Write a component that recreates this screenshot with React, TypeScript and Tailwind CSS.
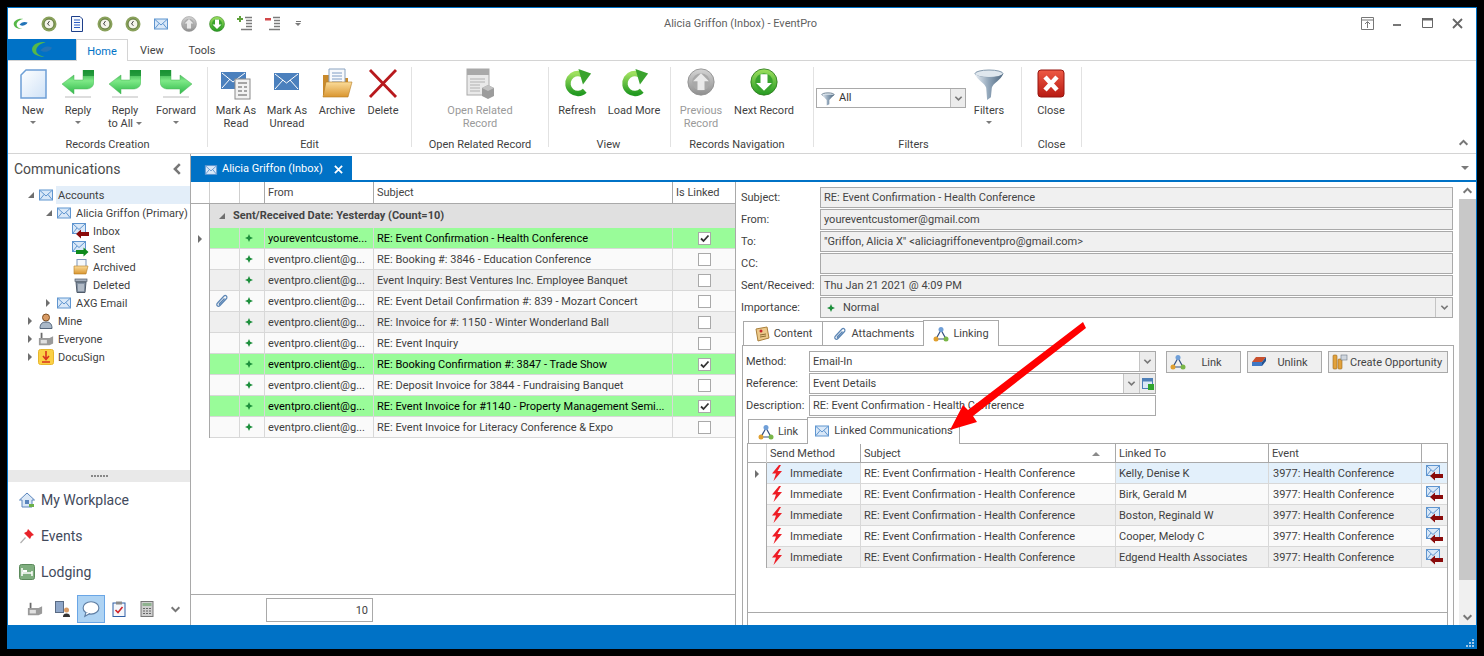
import type { ReactNode } from 'react';

const font = "font-['Roboto',sans-serif]";

type IconProps = { className?: string };

// shared gradients for all the drawn icons
function Defs() {
  return (
    <svg className="block h-0 w-0">
      <defs>
        <linearGradient id="gGreen" x1="0" y1="0" x2="0" y2="1">
          <stop offset="0" stopColor="#1f9d3a" />
          <stop offset="0.45" stopColor="#7ee987" />
          <stop offset="1" stopColor="#2fb84a" />
        </linearGradient>
        <linearGradient id="gDown" x1="0" y1="0" x2="0" y2="1">
          <stop offset="0" stopColor="#9ee05f" />
          <stop offset="1" stopColor="#249a22" />
        </linearGradient>
        <linearGradient id="gGray" x1="0" y1="0" x2="0" y2="1">
          <stop offset="0" stopColor="#d4d4d4" />
          <stop offset="1" stopColor="#8f8f8f" />
        </linearGradient>
        <linearGradient id="gFolder" x1="0" y1="0" x2="0" y2="1">
          <stop offset="0" stopColor="#fbdc9a" />
          <stop offset="1" stopColor="#d9952f" />
        </linearGradient>
        <linearGradient id="gPage" x1="0" y1="0" x2="1" y2="1">
          <stop offset="0" stopColor="#ffffff" />
          <stop offset="1" stopColor="#cfe2f7" />
        </linearGradient>
        <linearGradient id="gFunnel" x1="0" y1="0" x2="1" y2="0">
          <stop offset="0" stopColor="#e8eef4" />
          <stop offset="0.5" stopColor="#8fa4b8" />
          <stop offset="1" stopColor="#4f6880" />
        </linearGradient>
        <linearGradient id="gRed" x1="0" y1="0" x2="0" y2="1">
          <stop offset="0" stopColor="#ee5a45" />
          <stop offset="1" stopColor="#b81a12" />
        </linearGradient>
      </defs>
    </svg>
  );
}

function Mail({ className = 'w-[16px] h-[16px]' }: IconProps) {
  return (
    <svg viewBox="0 0 16 16" className={className}>
      <rect x="1.500" y="3" width="13" height="10" fill="#d9e8f8" stroke="#5f95cf" />
      <path d="M2 3.500 8 9l6-5.500M2 12.500 6 7.500M14 12.500 10 7.500" fill="none" stroke="#5f95cf" />
    </svg>
  );
}

function MailArrow({ color = '#8a0a0a', dir = 'in' }: { color?: string; dir?: 'in' | 'out' }) {
  return (
    <svg viewBox="0 0 18 16" className="h-[16px] w-[18px] shrink-0">
      <rect x="0.500" y="0.500" width="13" height="10" fill="#d9e8f8" stroke="#5f95cf" />
      <path d="M1 1 7 6.500 13 1M1 10l4-5" fill="none" stroke="#5f95cf" />
      {dir === 'in' ? (
        <path d="M4 11 9 6.500V9h8v4H9v2.500Z" fill={color} />
      ) : (
        <path d="M16.500 11 11.500 6.500V9H4v4h7.500v2.500Z" fill={color} />
      )}
    </svg>
  );
}

function Diamond() {
  return (
    <svg viewBox="0 0 8 8" className="h-[8px] w-[8px]">
      <path d="M4 0 5.200 2.800 8 4 5.200 5.200 4 8 2.800 5.200 0 4 2.800 2.800Z" fill="#1d8f3c" />
    </svg>
  );
}

function TriDown({ className = '' }: IconProps) {
  return <span className={`inline-block h-0 w-0 border-x-[3px] border-t-[3px] border-x-transparent border-t-[#7a7a7a] ${className}`} />;
}

function TriRight() {
  return <span className="inline-block h-0 w-0 border-y-[4px] border-l-[4px] border-y-transparent border-l-[#6f6f6f]" />;
}

function TriOpen() {
  return (
    <svg viewBox="0 0 6 6" className="h-[6px] w-[6px] shrink-0">
      <path d="M6 0V6H0Z" fill="#6f6f6f" />
    </svg>
  );
}

function Chevron({ className = '', dir = 'down' }: { className?: string; dir?: 'down' | 'up' | 'left' }) {
  const d = dir === 'down' ? 'M1.500 3 5 6.500 8.500 3' : dir === 'up' ? 'M1.500 7 5 3.500 8.500 7' : 'M7 1.500 3.500 5 7 8.500';
  return (
    <svg viewBox="0 0 10 10" className={className}>
      <path d={d} fill="none" stroke="#777777" strokeWidth="1.800" />
    </svg>
  );
}

function ClockQuick() {
  return (
    <svg viewBox="0 0 16 16" className="h-[16px] w-[16px]">
      <circle cx="8" cy="8" r="7.500" fill="#8aa25c" />
      <circle cx="8" cy="8" r="5" fill="#f4f4ea" stroke="#5d7538" />
      <path d="M8.500 5 6.500 8l2 1.500" fill="none" stroke="#444" />
    </svg>
  );
}

function CircleArrow({ up, size = 16 }: { up?: boolean; size?: number }) {
  return (
    <svg viewBox="0 0 32 32" style={{ width: size, height: size }}>
      <circle cx="16" cy="16" r="15" fill={up ? 'url(#gGray)' : 'url(#gDown)'} stroke={up ? '#8f8f8f' : '#2e7d1e'} />
      <circle cx="16" cy="16" r="10" fill={up ? '#a9a9a9' : '#3aa32e'} />
      {up ? (
        <path d="M16 6 25 15H20V25H12V15H7Z" fill="#e9e9e9" />
      ) : (
        <path d="M16 26 25 17H20V7H12V17H7Z" fill="#ffffff" />
      )}
    </svg>
  );
}

function QuickList({ add }: { add?: boolean }) {
  return (
    <svg viewBox="0 0 16 16" className="h-[16px] w-[16px]">
      {add ? <path d="M2 0h2v2h2v2H4v2H2V4H0V2h2Z" fill="#5fa03a" /> : <rect x="0" y="2" width="6" height="2.500" fill="#d2474a" />}
      <path d="M8 1.500h7M9 4.500h6M9 7.500h6M9 10.500h6M4 13.500h11" stroke="#7b7b7b" strokeWidth="1.400" />
    </svg>
  );
}

function LogoSwirl({ className }: IconProps) {
  return (
    <svg viewBox="0 0 22 16" className={className}>
      <path d="M14 1C6 0 1 4 1 8c0 4 5 7 12 7-5-1-8-3-8-6 0-4 4-7 9-8Z" fill="#56b848" />
      <path d="M9 9c2-3 6-5 11-3-1 3-6 6-11 3Z" fill="#2274b8" />
    </svg>
  );
}

function ReplyBig() {
  return (
    <svg viewBox="0 0 32 28" className="mt-[2px] h-[28px] w-[32px]">
      <path d="M0 14 12 5V10H21V0H32V11C32 17 28 19 24 19H12V24Z" fill="url(#gGreen)" stroke="#4fb55a" strokeWidth="0.500" />
      <path d="M21 0H32V6H21Z" fill="#138a2e" opacity="0.700" />
      <rect x="3" y="26" width="26" height="2" fill="#dddddd" />
    </svg>
  );
}

function ForwardBig() {
  return (
    <svg viewBox="0 0 32 28" className="mt-[2px] h-[28px] w-[32px]">
      <path d="M32 14 20 5V10H11V0H0V11C0 17 4 19 8 19H20V24Z" fill="url(#gGreen)" stroke="#4fb55a" strokeWidth="0.500" />
      <path d="M0 0H11V6H0Z" fill="#138a2e" opacity="0.700" />
      <rect x="3" y="26" width="26" height="2" fill="#dddddd" />
    </svg>
  );
}

function RefreshBig() {
  return (
    <svg viewBox="0 0 32 32" className="mt-[1px] h-[29px] w-[29px]">
      <path d="M24 24A11 11 0 1 1 21 6" fill="none" stroke="url(#gDown)" strokeWidth="6" />
      <path d="M17 0 31 5 22 17Z" fill="#3aa32e" />
    </svg>
  );
}

const bigIcons: Record<string, ReactNode> = {
  new: (
    <svg viewBox="0 0 32 32" className="h-[32px] w-[32px]">
      <path d="M9 2H29V30H4V7Z" fill="url(#gPage)" stroke="#6d9fd6" strokeWidth="1.500" />
    </svg>
  ),
  reply: <ReplyBig />,
  forward: <ForwardBig />,
  read: (
    <svg viewBox="0 0 32 32" className="h-[32px] w-[32px]">
      <rect x="1" y="4" width="25" height="17" fill="#4b80bd" />
      <path d="M2 5 13 14 25 5M2 20l8-9M25 20l-8-9" fill="none" stroke="#ffffff" />
      <rect x="15" y="11" width="15" height="20" fill="#f2f2f2" stroke="#8a8a8a" />
      <path d="M18 15h9M18 19h4M24 19h3M18 23h4M24 23h3M18 27h9" stroke="#a5a5a5" strokeWidth="2" />
    </svg>
  ),
  unread: (
    <svg viewBox="0 0 32 32" className="h-[32px] w-[32px]">
      <rect x="3" y="5" width="25" height="17" fill="#4b80bd" />
      <path d="M4 6 15.500 15 27 6M4 21l8-9M27 21l-8-9" fill="none" stroke="#ffffff" />
    </svg>
  ),
  archive: (
    <svg viewBox="0 0 32 32" className="h-[32px] w-[32px]">
      <path d="M2 7H12L14 10H27V27H2Z" fill="#c98a2c" />
      <path d="M8 1H24V20H8Z" fill="#f7f9fc" stroke="#8aa3c0" />
      <path d="M11 5H21M11 8H21M11 11H21M11 14H21" stroke="#7e9cc4" />
      <path d="M5 14H31L27 29H2Z" fill="url(#gFolder)" stroke="#b67c24" strokeWidth="0.600" />
    </svg>
  ),
  delete: (
    <svg viewBox="0 0 32 32" className="h-[32px] w-[32px]">
      <path d="M3 2 29 29M29 2 3 29" stroke="#b8191d" strokeWidth="2.800" />
    </svg>
  ),
  related: (
    <svg viewBox="0 0 32 32" className="h-[32px] w-[32px]">
      <rect x="3" y="1" width="22" height="26" fill="#e9e9e9" stroke="#a9a9a9" />
      <rect x="3" y="1" width="22" height="6" fill="#a9a9a9" />
      <path d="M6 11H21M6 14H21M6 17H16M6 20H16M6 23H16" stroke="#b1b1b1" />
      <path d="M18 20 24 17 30 20V28L24 31 18 28Z" fill="#9c9c9c" />
      <path d="M18 20 24 23 30 20 24 17Z" fill="#c2c2c2" />
    </svg>
  ),
  refresh: <RefreshBig />,
  prev: <CircleArrow up size={28} />,
  next: <CircleArrow size={28} />,
  filter: (
    <svg viewBox="0 0 32 34" className="h-[34px] w-[30px]">
      <ellipse cx="16" cy="5" rx="15" ry="4" fill="#dfe7ee" stroke="#7d93a8" />
      <path d="M1 5C3 12 12 15 13 20L14 33 18 30 19 20C20 15 29 12 31 5 26 10 6 10 1 5Z" fill="url(#gFunnel)" />
    </svg>
  ),
  close: (
    <svg viewBox="0 0 32 32" className="h-[32px] w-[32px]">
      <rect x="3" y="2" width="26" height="27" rx="3" fill="url(#gRed)" stroke="#96150f" />
      <path d="M10 9 22 22M22 9 10 22" stroke="#ffffff" strokeWidth="4.500" />
    </svg>
  ),
};

function NetLink() {
  return (
    <svg viewBox="0 0 16 16" className="h-[16px] w-[16px] shrink-0">
      <path d="M8 4 3 13H13Z" fill="none" stroke="#35507f" strokeWidth="1.200" />
      <circle cx="8" cy="3.500" r="2.500" fill="#6f9fd8" />
      <circle cx="3" cy="13" r="2.500" fill="#e0a030" />
      <circle cx="13" cy="13" r="2.500" fill="#7ab648" />
    </svg>
  );
}

function Clip({ className = 'h-[16px] w-[16px]' }: IconProps) {
  return (
    <svg viewBox="0 0 16 16" className={className}>
      <path d="M13 5 6 12.500C4 14.500 1.500 12 3.500 10L10 3C11.500 1.500 14 3.500 12.500 5.500L6.500 11.500C5.700 12.200 4.700 11.300 5.500 10.500L10.500 5.500" fill="none" stroke="#5c86b5" strokeWidth="1.200" />
    </svg>
  );
}

function Bolt() {
  return (
    <svg viewBox="0 0 12 16" className="h-[16px] w-[12px] shrink-0">
      <path d="M8 0 1 8.500H5L2.500 16 11 6H6.500L10 0Z" fill="#ee1c25" />
    </svg>
  );
}

function Checkbox({ checked }: { checked?: boolean }) {
  return (
    <span className="flex h-[13px] w-[13px] items-center justify-center border border-[#a9a9a9] bg-white">
      {checked && (
        <svg viewBox="0 0 11 11" className="h-[11px] w-[11px]">
          <path d="M2 5.500 4.500 8 9.500 2.500" fill="none" stroke="#333333" strokeWidth="1.800" />
        </svg>
      )}
    </span>
  );
}

type RibbonBtn = { label: string; line2?: string; icon: string; w: number; menu?: boolean; off?: boolean };

function RibbonButton({ label, line2, icon, w, menu, off }: RibbonBtn) {
  return (
    <div style={{ width: w }} className={`flex shrink-0 flex-col items-center text-center leading-[13px] ${off ? 'text-[#9a9a9a]' : 'text-[#3f3f3f]'}`}>
      <div className="flex h-[38px] items-start justify-center pt-[2px]">{bigIcons[icon]}</div>
      <div className="whitespace-nowrap">{label}</div>
      {line2 ? (
        <div className="flex items-center gap-[3px] whitespace-nowrap">
          {line2}
          {menu && <TriDown />}
        </div>
      ) : (
        menu && <TriDown className="mt-[4px]" />
      )}
    </div>
  );
}

function RibbonGroup({ w, pl, captionPr = 0, caption, children }: { w: number; pl: number; captionPr?: number; caption: string; children: ReactNode }) {
  return (
    <>
      <div style={{ width: w }} className="mt-[5px] flex h-[86px] shrink-0 flex-col">
        <div style={{ paddingLeft: pl }} className="flex h-[72px] items-start">
          {children}
        </div>
        <div style={{ paddingRight: captionPr }} className="text-center leading-[14px] text-[#3f3f3f]">
          {caption}
        </div>
      </div>
      <div className="mt-[6px] h-[80px] w-px shrink-0 bg-[#e2e2e2]" />
    </>
  );
}

function Ribbon() {
  return (
    <div className="flex h-[93px] border-b border-[#d4d4d4]">
      <RibbonGroup w={199} pl={4} caption="Records Creation">
        <RibbonButton label="New" icon="new" w={42} menu />
        <RibbonButton label="Reply" icon="reply" w={48} menu />
        <RibbonButton label="Reply" line2="to All" icon="reply" w={46} menu />
        <RibbonButton label="Forward" icon="forward" w={56} menu />
      </RibbonGroup>
      <RibbonGroup w={203} pl={6} caption="Edit">
        <RibbonButton label="Mark As" line2="Read" icon="read" w={44} />
        <RibbonButton label="Mark As" line2="Unread" icon="unread" w={58} />
        <RibbonButton label="Archive" icon="archive" w={42} />
        <RibbonButton label="Delete" icon="delete" w={50} />
      </RibbonGroup>
      <RibbonGroup w={136} pl={0} caption="Open Related Record">
        <RibbonButton label="Open Related" line2="Record" icon="related" w={136} off />
      </RibbonGroup>
      <RibbonGroup w={121} pl={4} captionPr={2} caption="View">
        <RibbonButton label="Refresh" icon="refresh" w={48} />
        <RibbonButton label="Load More" icon="refresh" w={66} />
      </RibbonGroup>
      <RibbonGroup w={142} pl={6} captionPr={10} caption="Records Navigation">
        <RibbonButton label="Previous" line2="Record" icon="prev" w={48} off />
        <RibbonButton label="Next Record" icon="next" w={78} />
      </RibbonGroup>
      <RibbonGroup w={207} pl={2} captionPr={8} caption="Filters">
        <div className="mt-[22px] flex h-[20px] w-[150px] border border-[#a9a9a9] bg-white">
          <div className="flex flex-1 items-center gap-[4px] pl-[4px] pt-[1px] text-[#333333]">
            <svg viewBox="0 0 16 16" className="h-[16px] w-[14px]">
              <ellipse cx="8" cy="3" rx="7" ry="2" fill="#dfe7ee" stroke="#5e7387" />
              <path d="M1 3 6.500 9V15.500L9.500 14V9L15 3Z" fill="url(#gFunnel)" />
            </svg>
            All
          </div>
          <div className="flex w-[15px] items-center justify-center border-l border-[#bdbdbd] bg-[#ececec]">
            <Chevron className="h-[9px] w-[9px]" />
          </div>
        </div>
        <RibbonButton label="Filters" icon="filter" w={46} menu />
      </RibbonGroup>
      <RibbonGroup w={59} pl={0} caption="Close">
        <RibbonButton label="Close" icon="close" w={58} />
      </RibbonGroup>
      <div className="ml-auto mr-[7px] self-end pb-[5px]">
        <Chevron dir="up" className="h-[11px] w-[11px]" />
      </div>
    </div>
  );
}

function TitleBar() {
  return (
    <div className="grid h-[31px] grid-cols-[1fr_auto_1fr] items-center pr-[3px]">
      <div className="flex items-center gap-[12px] pl-[5px]">
        <LogoSwirl className="h-[16px] w-[16px]" />
        <ClockQuick />
        <svg viewBox="0 0 16 16" className="h-[16px] w-[16px]">
          <path d="M2.500.5H11L13.500 3V15.500H2.500Z" fill="#f6f9fe" stroke="#1d3f8a" />
          <path d="M5 4H11M5 6.500H11M5 9H11M5 11.500H11" stroke="#2a5cc4" />
        </svg>
        <ClockQuick />
        <ClockQuick />
        <Mail />
        <CircleArrow up />
        <CircleArrow />
        <QuickList add />
        <QuickList />
        <div className="ml-[2px] flex flex-col items-center gap-[1px]">
          <span className="h-px w-[5px] bg-[#777777]" />
          <TriDown />
        </div>
      </div>
      <div className="pt-[2px] text-[#5f5f5f]">Alicia Griffon (Inbox) - EventPro</div>
      <div className="flex items-center justify-end gap-[17px] pr-[9px]">
        <svg viewBox="0 0 13 13" className="h-[13px] w-[13px]">
          <path d="M.5.500H12.500V12.500H.5ZM.5 3H12.500M6.500 11V5M4 7 6.500 4.500 9 7" fill="none" stroke="#777777" />
        </svg>
        <svg viewBox="0 0 13 13" className="h-[13px] w-[13px]">
          <rect x="2" y="7" width="8" height="2" fill="#777777" />
        </svg>
        <svg viewBox="0 0 13 13" className="h-[13px] w-[13px]">
          <path d="M1.500 1.500H11.500V10.500H1.500Z" fill="none" stroke="#666666" />
          <rect x="1" y="1" width="11" height="2.500" fill="#666666" />
        </svg>
        <svg viewBox="0 0 13 13" className="h-[13px] w-[13px]">
          <path d="M2 2 11 11M11 2 2 11" stroke="#666666" strokeWidth="1.800" />
        </svg>
      </div>
    </div>
  );
}

function TabsRow() {
  return (
    <div className="flex h-[22px] items-stretch border-b border-[#d4d4d4]">
      <div className="flex w-[68px] items-center justify-center bg-[#0072c6]">
        <LogoSwirl className="h-[17px] w-[23px]" />
      </div>
      <div className="z-10 -mb-px flex w-[52px] items-center justify-center border-x border-t border-[#d4d4d4] bg-white pt-[3px] text-[#0072c6]">Home</div>
      <div className="flex w-[48px] items-center justify-center pt-[4px] text-[#444444]">View</div>
      <div className="flex w-[52px] items-center justify-center pt-[4px] text-[#444444]">Tools</div>
    </div>
  );
}

type TreeRow = { label: string; indent: number; toggle?: 'open' | 'closed'; icon: ReactNode; active?: boolean };

const person = (
  <svg viewBox="0 0 16 16" className="h-[16px] w-[16px]">
    <circle cx="8" cy="4.500" r="3.500" fill="#d99b64" stroke="#7d4f22" />
    <path d="M2 15.500C2 10 5 9 8 9s6 1 6 6.500Z" fill="#a9b8c8" stroke="#54657a" />
  </svg>
);
const factory = (
  <svg viewBox="0 0 18 16" className="h-[16px] w-[16px]">
    <rect x="3" y="1" width="2" height="6" fill="#6a6a6a" />
    <path d="M1 7H13L17 5V13L13 15H1Z" fill="#9a9a9a" />
    <rect x="3" y="9" width="7" height="4" fill="#e0e0e0" />
  </svg>
);
const docusign = (
  <svg viewBox="0 0 16 16" className="h-[16px] w-[16px]">
    <rect x="0.500" y="0.500" width="15" height="15" rx="2" fill="#fbd045" stroke="#e8b62c" />
    <path d="M8 2V10M5 7 8 10.500 11 7M4 13H12" fill="none" stroke="#d8351f" strokeWidth="1.600" />
  </svg>
);

const tree: TreeRow[] = [
  { label: 'Accounts', indent: 20, toggle: 'open', icon: <Mail />, active: true },
  { label: 'Alicia Griffon (Primary)', indent: 38, toggle: 'open', icon: <Mail /> },
  { label: 'Inbox', indent: 55, icon: <MailArrow /> },
  { label: 'Sent', indent: 55, icon: <MailArrow color="#0e8a1d" dir="out" /> },
  {
    label: 'Archived',
    indent: 55,
    icon: (
      <svg viewBox="0 0 16 16" className="h-[16px] w-[16px]">
        <rect x="4" y="0.500" width="9" height="11" fill="#f5f8fc" stroke="#7c96b8" />
        <path d="M1 7H15L13 15H1Z" fill="url(#gFolder)" stroke="#b67c24" strokeWidth="0.600" />
      </svg>
    ),
  },
  {
    label: 'Deleted',
    indent: 55,
    icon: (
      <svg viewBox="0 0 16 16" className="h-[16px] w-[16px]">
        <path d="M3 5H13L12 15.500H4Z" fill="#8592a3" stroke="#4f5a69" />
        <rect x="2" y="2" width="12" height="2.500" fill="#a5afbd" stroke="#4f5a69" strokeWidth="0.700" />
        <path d="M6 7V14M8 7V14M10 7V14" stroke="#dfe4ea" />
      </svg>
    ),
  },
  { label: 'AXG Email', indent: 38, toggle: 'closed', icon: <Mail /> },
  { label: 'Mine', indent: 20, toggle: 'closed', icon: person },
  { label: 'Everyone', indent: 20, toggle: 'closed', icon: factory },
  { label: 'DocuSign', indent: 20, toggle: 'closed', icon: docusign },
];

function LeftPanel() {
  return (
    <div className="flex h-full w-[183px] shrink-0 flex-col border-r border-[#a9a9a9]">
      <div className="flex h-[32px] items-center justify-between pb-[2px] pl-[6px] pr-[6px] text-[14px] text-[#4a4a4a]">
        Communications
        <Chevron dir="left" className="h-[14px] w-[14px]" />
      </div>
      <div className="flex-1">
        {tree.map((row) => (
          <div key={row.label} style={{ paddingLeft: row.indent }} className="flex h-[18px] items-center whitespace-nowrap text-[#3f3f3f]">
            <span className="flex w-[10px] shrink-0 items-center">
              {row.toggle === 'open' && <TriOpen />}
              {row.toggle === 'closed' && <TriRight />}
            </span>
            <span className="flex w-[16px] shrink-0 justify-center">{row.icon}</span>
            <span className={`ml-[2px] flex h-[18px] flex-1 items-center pl-[2px] pt-[2px] ${row.active ? 'bg-[#e3eef9]' : ''}`}>{row.label}</span>
          </div>
        ))}
      </div>
      <div className="flex h-[12px] items-center justify-center gap-[1px] bg-[#e9e9e9]">
        {[0, 1, 2, 3, 4, 5].map((n) => (
          <span key={n} className="h-[2px] w-[2px] bg-[#888888]" />
        ))}
      </div>
      <NavItem label="My Workplace" icon={
        <svg viewBox="0 0 16 16" className="h-[16px] w-[16px]">
          <path d="M8 1 0.500 8H3V15H13V8H15.500Z" fill="#dbe8f6" stroke="#5a85bd" />
          <rect x="6" y="8" width="4" height="4" fill="#5a85bd" />
          <rect x="10" y="12" width="5" height="3" fill="#6cb04a" />
        </svg>
      } />
      <NavItem label="Events" icon={
        <svg viewBox="0 0 16 16" className="h-[16px] w-[16px]">
          <path d="M9 1 15 7 12.500 8 11 11 5 5 8 3.500Z" fill="#e8232a" />
          <path d="M6.500 9.500 1.500 15" stroke="#b0b0b0" strokeWidth="1.200" />
        </svg>
      } />
      <NavItem label="Lodging" icon={
        <svg viewBox="0 0 16 16" className="h-[16px] w-[16px]">
          <rect x="0.500" y="0.500" width="15" height="15" rx="2" fill="#7fae7f" stroke="#5b8a5b" />
          <path d="M3 4V12M13 7V12M3 9H13" stroke="#ffffff" strokeWidth="1.500" />
          <rect x="4" y="6" width="4" height="2" fill="#ffffff" />
        </svg>
      } />
      <div className="flex h-[35px] items-start pl-[13px] pt-[5px]">
        <SmallSlot>{factory}</SmallSlot>
        <SmallSlot>
          <svg viewBox="0 0 16 16" className="h-[16px] w-[16px]">
            <rect x="0.500" y="0.500" width="8" height="11" fill="#8fa7c9" stroke="#5a6b84" />
            <circle cx="11.500" cy="9" r="2.500" fill="#d99b64" />
            <path d="M8 16C8 13 10 12.500 11.500 12.500S15 13 15 16Z" fill="#333333" />
          </svg>
        </SmallSlot>
        <SmallSlot active>
          <svg viewBox="0 0 16 16" className="h-[18px] w-[18px]">
            <ellipse cx="8" cy="7" rx="7" ry="5.500" fill="#ffffff" stroke="#5f7ea3" />
            <path d="M3.500 11 2.500 14.500 7 12" fill="#ffffff" stroke="#5f7ea3" />
          </svg>
        </SmallSlot>
        <SmallSlot>
          <svg viewBox="0 0 16 16" className="h-[16px] w-[16px]">
            <rect x="2" y="2" width="12" height="13.500" fill="#f5f7fb" stroke="#2f5fa6" />
            <rect x="5" y="0.500" width="6" height="3" fill="#8b8b8b" />
            <path d="M4.500 9 7 11.500 11.500 6" fill="none" stroke="#d0242a" strokeWidth="1.600" />
          </svg>
        </SmallSlot>
        <SmallSlot>
          <svg viewBox="0 0 16 16" className="h-[16px] w-[16px]">
            <rect x="2" y="0.500" width="12" height="15" fill="#cfcfcf" stroke="#777777" />
            <rect x="3.500" y="2" width="9" height="3" fill="#8fb28f" />
            <path d="M4 7.500H12M4 10H12M4 12.500H12" stroke="#666666" strokeWidth="1.200" strokeDasharray="2 1" />
          </svg>
        </SmallSlot>
        <div className="flex h-[28px] w-[28px] items-center justify-center">
          <Chevron className="h-[11px] w-[11px]" />
        </div>
      </div>
    </div>
  );
}

function NavItem({ label, icon }: { label: string; icon: ReactNode }) {
  return (
    <div className="flex h-[36px] items-center gap-[6px] pl-[11px] text-[14px] text-[#424a5c]">
      {icon}
      {label}
    </div>
  );
}

function SmallSlot({ children, active }: { children: ReactNode; active?: boolean }) {
  return (
    <div className={`flex h-[28px] w-[28px] items-center justify-center ${active ? 'border border-[#6aa6e6] bg-[#aed3f3]' : ''}`}>{children}</div>
  );
}

const messages = [
  { from: 'youreventcustome...', subject: 'RE: Event Confirmation - Health Conference', linked: true },
  { from: 'eventpro.client@g...', subject: 'RE: Booking #: 3846 - Education Conference' },
  { from: 'eventpro.client@g...', subject: 'Event Inquiry: Best Ventures Inc. Employee Banquet' },
  { from: 'eventpro.client@g...', subject: 'RE: Event Detail Confirmation #: 839 - Mozart Concert', clip: true },
  { from: 'eventpro.client@g...', subject: 'RE: Invoice for #: 1150 - Winter Wonderland Ball' },
  { from: 'eventpro.client@g...', subject: 'RE: Event Inquiry' },
  { from: 'eventpro.client@g...', subject: 'RE: Booking Confirmation #: 3847 - Trade Show', linked: true },
  { from: 'eventpro.client@g...', subject: 'RE: Deposit Invoice for 3844 - Fundraising Banquet' },
  { from: 'eventpro.client@g...', subject: 'RE: Event Invoice for #1140 - Property Management Semi...', linked: true },
  { from: 'eventpro.client@g...', subject: 'RE: Event Invoice for Literacy Conference & Expo' },
];

function MessageList() {
  return (
    <div className="flex h-full w-[545px] shrink-0 flex-col border-r border-[#a9a9a9]">
      <div className="grid h-[22px] grid-cols-[19px_30px_25px_109px_299px_62px] border-b border-[#a9a9a9] text-[#444444]">
        <div className="border-r border-[#cfcfcf]" />
        <div className="border-r border-[#cfcfcf]" />
        <div className="border-r border-[#a9a9a9]" />
        <div className="flex items-center border-r border-[#a9a9a9] pl-[3px] pt-[2px]">From</div>
        <div className="flex items-center border-r border-[#a9a9a9] pl-[3px] pt-[2px]">Subject</div>
        <div className="flex items-center pl-[3px] pt-[2px]">Is Linked</div>
      </div>
      <div className="flex h-[24px] pl-[18px]">
        <div className="flex flex-1 items-center gap-[8px] border-l border-[#a9a9a9] bg-[#e0e0e0] pl-[9px] font-bold text-[#444444]">
          <TriOpen />
          Sent/Received Date: Yesterday (Count=10)
        </div>
      </div>
      <div className="flex-1">
        {messages.map((m, i) => (
          <div key={i} className="grid h-[21px] grid-cols-[19px_30px_25px_109px_299px_62px]">
            <div className="flex items-center justify-center border-r border-[#a9a9a9]">{i === 0 && <TriRight />}</div>
            <div className={`col-span-5 grid grid-cols-subgrid border-b border-[#d8d8d8] ${m.linked ? 'bg-[#99fc99] text-black' : i % 2 === 0 ? 'bg-[#efefef] text-[#3f3f3f]' : 'bg-[#fafafa] text-[#3f3f3f]'}`}>
              <div className="flex items-center justify-center border-r border-[#d8d8d8] pr-[6px]">{m.clip && <Clip />}</div>
              <div className="flex items-center justify-center border-r border-[#d8d8d8] pr-[7px]">
                <Diamond />
              </div>
              <div className="flex items-center overflow-hidden whitespace-nowrap border-r border-[#d8d8d8] pl-[3px] pt-[2px]">{m.from}</div>
              <div className="flex items-center overflow-hidden whitespace-nowrap border-r border-[#d8d8d8] pl-[3px] pt-[2px]">{m.subject}</div>
              <div className="flex items-center justify-center">
                <Checkbox checked={m.linked} />
              </div>
            </div>
          </div>
        ))}
      </div>
      <div className="flex h-[31px] items-start border-t border-[#a9a9a9] pl-[75px] pt-[3px]">
        <div className="flex h-[24px] w-[107px] items-center justify-end border border-[#a9a9a9] pr-[4px] pt-[2px] text-[#3f3f3f]">10</div>
      </div>
    </div>
  );
}

function DetailRow({ label, value, children }: { label: string; value?: string; children?: ReactNode }) {
  return (
    <div className="mb-px flex h-[21px] items-stretch">
      <div className="flex w-[79px] shrink-0 items-center whitespace-nowrap pt-[2px] text-[#3f3f3f]">{label}</div>
      <div className="flex flex-1 items-center border border-[#a9a9a9] bg-[#f0f0f0] pl-[3px] text-[#444444]">
        <span className="pt-[2px]">{value}</span>
        {children}
      </div>
    </div>
  );
}

function TabHead({ label, icon, active, w, h = 24, textPt = 2 }: { label: string; icon: ReactNode; active?: boolean; w: number; h?: number; textPt?: number }) {
  return (
    <div
      style={{ width: w, height: h }}
      className={`flex items-center justify-center gap-[4px] whitespace-nowrap border-l border-t border-r border-[#a9a9a9] text-[#444444] ${active ? 'z-10 -mb-px -ml-px bg-white' : '-ml-px'}`}
    >
      {icon}
      <span style={{ paddingTop: textPt }}>{label}</span>
    </div>
  );
}

function FormRow({ label, children }: { label: string; children: ReactNode }) {
  return (
    <div className="mb-px flex h-[21px] items-stretch">
      <div className="flex w-[63px] shrink-0 items-center pt-[2px] text-[#3f3f3f]">{label}</div>
      {children}
    </div>
  );
}

function ActionButton({ label, icon, w, between }: { label: string; icon: ReactNode; w: number; between?: boolean }) {
  return (
    <div style={{ width: w }} className="flex h-[22px] items-center border border-[#a9a9a9] bg-[#efefef] pl-[3px] pr-[3px] text-[#444444]">
      {icon}
      <span className={`pt-[3px] ${between ? 'flex-1 text-center' : 'ml-[2px] whitespace-nowrap'}`}>{label}</span>
    </div>
  );
}

const links = [
  { to: 'Kelly, Denise K' },
  { to: 'Birk, Gerald M' },
  { to: 'Boston, Reginald W' },
  { to: 'Cooper, Melody C' },
  { to: 'Edgend Health Associates' },
];

function LinkedGrid() {
  return (
    <div className="ml-[1px] flex h-[182px] w-[701px] flex-col border-x border-t border-[#a9a9a9]">
      <div className="grid h-[19px] grid-cols-[19px_94px_255px_153px_153px_25px] border-b border-[#a9a9a9] text-[#444444]">
        <div className="border-r border-[#cfcfcf]" />
        <div className="flex items-center border-r border-[#a9a9a9] pl-[3px] pt-[2px]">Send Method</div>
        <div className="flex items-center justify-between border-r border-[#a9a9a9] pl-[3px] pr-[15px] pt-[2px]">
          Subject
          <span className="h-0 w-0 border-x-[4px] border-b-[4px] border-x-transparent border-b-[#8a8a8a]" />
        </div>
        <div className="flex items-center border-r border-[#a9a9a9] pl-[3px] pt-[2px]">Linked To</div>
        <div className="flex items-center border-r border-[#a9a9a9] pl-[3px] pt-[2px]">Event</div>
        <div />
      </div>
      <div className="flex-1">
        {links.map((l, i) => {
          const bg = i === 0 ? 'bg-[#e3f0fb]' : i % 2 === 0 ? 'bg-[#efefef]' : 'bg-[#fafafa]';
          return (
            <div key={l.to} className="grid h-[21px] grid-cols-[19px_94px_255px_153px_153px_25px] text-[#3f3f3f]">
              <div className="flex items-center justify-center border-r border-[#a9a9a9]">{i === 0 && <TriRight />}</div>
              <div className={`flex items-center gap-[7px] border-b border-r border-[#d8d8d8] pl-[4px] ${bg}`}>
                <Bolt />
                <span className="pt-[2px]">Immediate</span>
              </div>
              <div className={`flex items-center border-b border-r border-[#d8d8d8] pl-[3px] pt-[2px] ${i === 0 ? 'bg-white' : bg}`}>RE: Event Confirmation - Health Conference</div>
              <div className={`flex items-center border-b border-r border-[#d8d8d8] pl-[3px] pt-[2px] ${bg}`}>{l.to}</div>
              <div className={`flex items-center border-b border-r border-[#d8d8d8] pl-[4px] pt-[2px] ${bg}`}>3977: Health Conference</div>
              <div className={`flex items-center justify-center border-b border-[#d8d8d8] ${bg}`}>
                <MailArrow />
              </div>
            </div>
          );
        })}
      </div>
      <div className="h-[13px] border-t border-[#a9a9a9]" />
    </div>
  );
}

function DetailPanel() {
  return (
    <div className="w-[723px] shrink-0 overflow-hidden pt-[5px]">
      <div className="pl-[5px] pr-[6px]">
        <DetailRow label="Subject:" value="RE: Event Confirmation - Health Conference" />
        <DetailRow label="From:" value="youreventcustomer@gmail.com" />
        <DetailRow label="To:" value={'"Griffon, Alicia X" <aliciagriffoneventpro@gmail.com>'} />
        <DetailRow label="CC:" />
        <DetailRow label="Sent/Received:" value="Thu Jan 21 2021 @ 4:09 PM" />
        <DetailRow label="Importance:">
          <span className="ml-[3px] mr-[8px] flex">
            <Diamond />
          </span>
          <span className="pt-[2px]">Normal</span>
          <span className="ml-auto flex h-full w-[17px] items-center justify-center border-l border-[#c4c4c4]">
            <Chevron className="h-[9px] w-[9px]" />
          </span>
        </DetailRow>
      </div>
      <div className="ml-[8px] mt-[2px] flex items-end">
        <TabHead w={80} label="Content" icon={
          <svg viewBox="0 0 16 16" className="h-[16px] w-[16px]">
            <path d="M2 3 13 1 15 12 4 15Z" fill="#ecc98a" stroke="#a97f3a" />
            <circle cx="7" cy="5" r="1.500" fill="#c9252b" />
            <path d="M6 9 12 8M6 11 12 10" stroke="#8a6a30" />
          </svg>
        } />
        <TabHead w={102} label="Attachments" icon={<Clip />} />
        <TabHead w={76} h={26} active label="Linking" icon={<NetLink />} />
      </div>
      <div className="ml-[6px] w-[712px] border-l border-r border-t border-[#a9a9a9] pl-[3px] pt-[5px]">
        <div className="flex items-start">
          <div className="w-[410px]">
            <FormRow label="Method:">
              <div className="flex flex-1 items-stretch border border-[#a9a9a9]">
                <span className="flex flex-1 items-center pl-[3px] pt-[2px] text-[#3f3f3f]">Email-In</span>
                <span className="flex w-[16px] items-center justify-center border-l border-[#c4c4c4] bg-[#ececec]">
                  <Chevron className="h-[9px] w-[9px]" />
                </span>
              </div>
            </FormRow>
            <FormRow label="Reference:">
              <div className="flex flex-1 items-stretch border border-[#a9a9a9]">
                <span className="flex flex-1 items-center pl-[3px] pt-[2px] text-[#3f3f3f]">Event Details</span>
                <span className="flex w-[16px] items-center justify-center border-l border-[#c4c4c4] bg-[#ececec]">
                  <Chevron className="h-[9px] w-[9px]" />
                </span>
                <span className="flex w-[16px] items-center justify-center border-l border-[#c4c4c4] bg-[#ececec]">
                  <svg viewBox="0 0 12 12" className="h-[12px] w-[12px]">
                    <rect x="0.500" y="0.500" width="10" height="10" fill="#dbe8f6" stroke="#4f80b8" />
                    <rect x="0.500" y="0.500" width="10" height="3" fill="#4f80b8" />
                    <rect x="6" y="6" width="6" height="6" fill="#2fa52f" />
                  </svg>
                </span>
              </div>
            </FormRow>
            <FormRow label="Description:">
              <div className="flex flex-1 items-center border border-[#a9a9a9] pl-[3px] pt-[2px] text-[#3f3f3f]">RE: Event Confirmation - Health Conference</div>
            </FormRow>
          </div>
          <div className="ml-[10px] flex gap-[6px]">
            <ActionButton w={75} between label="Link" icon={<NetLink />} />
            <ActionButton w={75} between label="Unlink" icon={
              <svg viewBox="0 0 16 16" className="h-[16px] w-[16px] shrink-0">
                <path d="M5 3H15L11 8H1Z" fill="#c9502e" />
                <path d="M1 8H11V12H1Z" fill="#3f78c4" />
                <path d="M11 8 15 3V7L11 12Z" fill="#24528f" />
              </svg>
            } />
            <ActionButton w={120} label="Create Opportunity" icon={
              <svg viewBox="0 0 16 16" className="h-[16px] w-[16px] shrink-0">
                <rect x="1" y="1" width="4" height="14" rx="1" fill="#e2a23c" stroke="#9a6a1c" strokeWidth="0.600" />
                <rect x="6" y="5" width="4" height="10" rx="1" fill="#e2a23c" stroke="#9a6a1c" strokeWidth="0.600" />
                <rect x="9" y="1" width="6" height="5" fill="#cfd6de" stroke="#6d7885" strokeWidth="0.600" />
              </svg>
            } />
          </div>
        </div>
        <div className="ml-[3px] flex items-end">
          <TabHead w={60} label="Link" textPt={1} icon={<NetLink />} />
          <TabHead w={153} h={27} active label="Linked Communications" textPt={1} icon={<Mail />} />
        </div>
        <LinkedGrid />
      </div>
    </div>
  );
}

function ScrollBar() {
  return (
    <div className="flex h-full w-[17px] shrink-0 flex-col">
      <div className="flex h-[17px] items-center justify-center">
        <Chevron dir="up" className="h-[11px] w-[11px]" />
      </div>
      <div className="h-[381px] bg-[#c8c8c8]" />
      <div className="flex flex-1 items-end justify-center bg-[#f0f0f0] pb-[2px]">
        <Chevron className="h-[11px] w-[11px]" />
      </div>
    </div>
  );
}

function RedArrow() {
  return (
    <svg viewBox="0 0 150 125" className="pointer-events-none absolute left-[943px] top-[315px] z-50 h-[125px] w-[150px]">
      <path d="M140 7 143 13 30 101 34 107 7 115 20 90 25 95Z" fill="#ff0000" />
    </svg>
  );
}

export default function App() {
  return (
    <div className={`relative h-[656px] w-[1484px] overflow-hidden bg-black p-[7px] text-[11px] ${font}`}>
      <Defs />
      <div className="flex h-[642px] w-[1470px] flex-col border-x border-t border-[#0072c6] bg-white">
        <TitleBar />
        <TabsRow />
        <Ribbon />
        <div className="flex min-h-0 flex-1">
          <LeftPanel />
          <div className="flex min-w-0 flex-1 flex-col">
            <div className="flex h-[28px] items-end justify-between border-b-2 border-[#0072c6]">
              <div className="flex h-[24px] w-[161px] items-center gap-[4px] whitespace-nowrap bg-[#0072c6] pl-[13px] pt-[3px] text-white">
                <Mail className="h-[14px] w-[14px]" />
                Alicia Griffon (Inbox)
                <svg viewBox="0 0 10 10" className="ml-auto mr-[9px] h-[9px] w-[9px]">
                  <path d="M1 1 9 9M9 1 1 9" stroke="#ffffff" strokeWidth="2" />
                </svg>
              </div>
              <TriDown className="mb-[10px] mr-[7px] border-x-[4px] border-t-[4px]" />
            </div>
            <div className="flex min-h-0 flex-1">
              <MessageList />
              <DetailPanel />
              <ScrollBar />
            </div>
          </div>
        </div>
        <div className="flex h-[24px] shrink-0 items-end justify-end bg-[#0072c6] p-[2px]">
          <svg viewBox="0 0 8 8" className="h-[8px] w-[8px]">
            <path d="M6 0h2v2H6ZM3 3h2v2H3ZM6 3h2v2H6ZM0 6h2v2H0ZM3 6h2v2H3ZM6 6h2v2H6Z" fill="#9fc7e8" />
          </svg>
        </div>
      </div>
      <RedArrow />
    </div>
  );
}
